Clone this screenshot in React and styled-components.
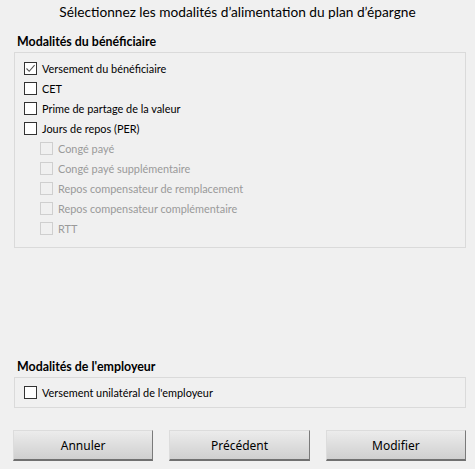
import styled, { createGlobalStyle } from "styled-components";

const GlobalStyle = createGlobalStyle`
  html, body {
    margin: 0;
    padding: 0;
    background: #f0f0f0;
  }
  body {
    font-family: Lato, "Noto Sans", sans-serif;
    color: #000;
  }
`;

const beneficiaire = [
  { label: "Versement du bénéficiaire", checked: true },
  { label: "CET" },
  { label: "Prime de partage de la valeur" },
  { label: "Jours de repos (PER)" },
  { label: "Congé payé", sub: true, disabled: true },
  { label: "Congé payé supplémentaire", sub: true, disabled: true },
  { label: "Repos compensateur de remplacement", sub: true, disabled: true },
  { label: "Repos compensateur complémentaire", sub: true, disabled: true },
  { label: "RTT", sub: true, disabled: true },
];

function Checkbox({ label, checked, disabled, sub }) {
  return (
    <Row $sub={sub} $disabled={disabled}>
      <Box $disabled={disabled}>
        {checked && (
          <svg width="11" height="11" viewBox="0 0 11 11">
            <path d="M1.5 5.5 L4.2 8.3 L9.6 2.2" fill="none" stroke="#555" strokeWidth="1.1" />
          </svg>
        )}
      </Box>
      <span>{label}</span>
    </Row>
  );
}

export default function App() {
  return (
    <Page>
      <GlobalStyle />
      <Title>Sélectionnez les modalités d’alimentation du plan d’épargne</Title>
      <GroupTitle>Modalités du bénéficiaire</GroupTitle>
      <Panel $tall>
        {beneficiaire.map((item) => (
          <Checkbox key={item.label} {...item} />
        ))}
      </Panel>
      <Spacer />
      <GroupTitle>Modalités de l'employeur</GroupTitle>
      <Panel>
        <Checkbox label="Versement unilatéral de l'employeur" />
      </Panel>
      <Buttons>
        <Button>Annuler</Button>
        <Button>Précédent</Button>
        <Button>Modifier</Button>
      </Buttons>
    </Page>
  );
}

const Page = styled.div`
  width: 475px;
  height: 469px;
  box-sizing: border-box;
  padding: 0 9px 8px 14px;
  display: flex;
  flex-direction: column;
`;

const Title = styled.div`
  height: 26px;
  line-height: 23px;
  font-size: 13.7px;
  text-align: center;
  margin-left: -5px;
`;

const GroupTitle = styled.div`
  font-size: 12.4px;
  font-weight: 700;
  height: 26px;
  line-height: 32px;
  padding-left: 3px;
`;

const Panel = styled.div`
  border: 1px solid #dadada;
  box-sizing: border-box;
  padding: ${(p) => (p.$tall ? "5px 0 0" : "4px 0")};
  height: ${(p) => (p.$tall ? "196px" : "31px")};
  display: flex;
  flex-direction: column;
`;

const Row = styled.label`
  display: flex;
  align-items: center;
  gap: 5px;
  height: 20px;
  padding-left: ${(p) => (p.$sub ? "25px" : "9px")};
  font-size: 10.9px;
  color: ${(p) => (p.$disabled ? "#9a9a9a" : "#000")};
`;

const Box = styled.span`
  width: 13px;
  height: 13px;
  box-sizing: border-box;
  border: 1px solid ${(p) => (p.$disabled ? "#cfcfcf" : "#333")};
  background: ${(p) => (p.$disabled ? "#f0f0f0" : "#fff")};
  display: flex;
  align-items: center;
  justify-content: center;
`;

const Spacer = styled.div`
  flex: 1;
`;

const Buttons = styled.div`
  display: flex;
  gap: 16px;
  margin-top: 22px;
  margin-left: -1px;
`;

const Button = styled.button`
  width: 141px;
  height: 31px;
  font-family: "Noto Sans", sans-serif;
  font-size: 12px;
  color: #000;
  background: linear-gradient(#ececec, #cfcfcf);
  border: 1px solid #dcdcdc;
  border-right: 1px solid #7a7a7a;
  border-bottom: 2px solid #707070;
  padding: 0;
`;
